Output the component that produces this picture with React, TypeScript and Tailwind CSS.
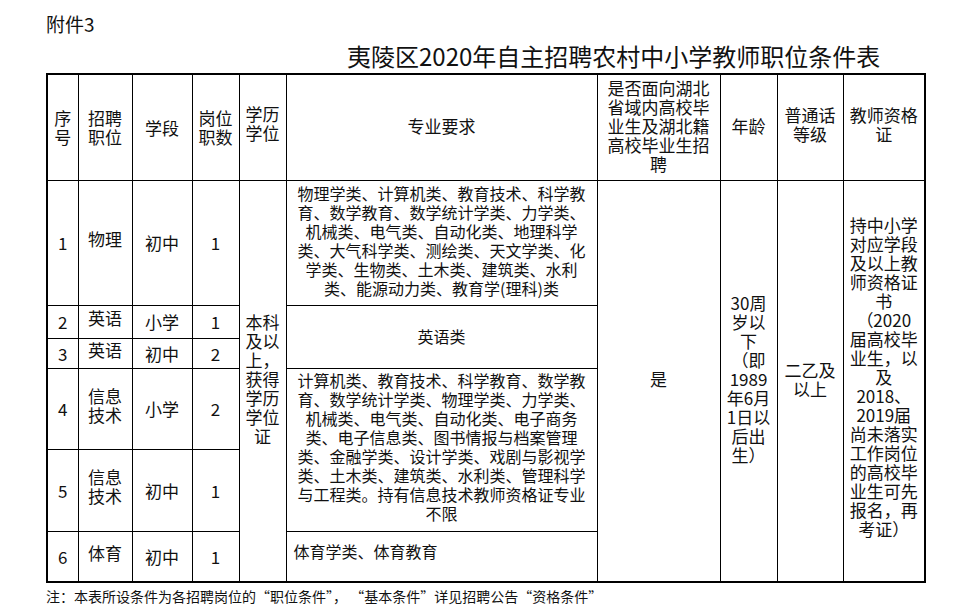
import React from 'react';

const cell = 'border border-black text-center align-middle p-0 whitespace-nowrap';

const Lines = ({ lines }: { lines: string[] }) => (
  <>
    {lines.map((l, i) => (
      <div key={i}>{l}</div>
    ))}
  </>
);

const physicsMajors = [
  '物理学类、计算机类、教育技术、科学教',
  '育、数学教育、数学统计学类、力学类、',
  '机械类、电气类、自动化类、地理科学',
  '类、大气科学类、测绘类、天文学类、化',
  '学类、生物类、土木类、建筑类、水利',
  '类、能源动力类、教育学(理科)类',
];

const itMajors = [
  '计算机类、教育技术、科学教育、数学教',
  '育、数学统计学类、物理学类、力学类、',
  '机械类、电气类、自动化类、电子商务',
  '类、电子信息类、图书情报与档案管理',
  '类、金融学类、设计学类、戏剧与影视学',
  '类、土木类、建筑类、水利类、管理科学',
  '与工程类。持有信息技术教师资格证专业',
  '不限',
];

const ageLines = ['30周', '岁以', '下', '（即', '1989', '年6月', '1日以', '后出', '生）'];

const certLines = [
  '持中小学',
  '对应学段',
  '及以上教',
  '师资格证',
  '书',
  '（2020',
  '届高校毕',
  '业生，以',
  '及',
  '2018、',
  '2019届',
  '尚未落实',
  '工作岗位',
  '的高校毕',
  '业生可先',
  '报名，再',
  '考证）',
];

export default function App() {
  return (
    <div className="w-[980px] h-[609px] bg-white text-[#111] font-['Noto_Sans_CJK_SC','Noto_Sans',sans-serif] pl-[46px] pt-[11px] overflow-hidden">
      <div className="text-[19px] leading-[25px]">附件3</div>
      <div className="mt-[5px] mb-[2px] pl-[301px] text-[24px] leading-[30px]">
        夷陵区2020年自主招聘农村中小学教师职位条件表
      </div>

      <table className="table-fixed border-collapse border-2 border-black w-[880px] text-[17px] leading-[19px]">
        <colgroup>
          <col className="w-[31px]" />
          <col className="w-[54px]" />
          <col className="w-[60px]" />
          <col className="w-[47px]" />
          <col className="w-[47px]" />
          <col className="w-[311px]" />
          <col className="w-[123px]" />
          <col className="w-[57px]" />
          <col className="w-[66px]" />
          <col className="w-[82px]" />
        </colgroup>
        <thead>
          <tr className="h-[106px]">
            <th className={`${cell} font-normal`}>
              <Lines lines={['序', '号']} />
            </th>
            <th className={`${cell} font-normal`}>
              <Lines lines={['招聘', '职位']} />
            </th>
            <th className={`${cell} font-normal`}>学段</th>
            <th className={`${cell} font-normal`}>
              <Lines lines={['岗位', '职数']} />
            </th>
            <th className={`${cell} font-normal pb-[8px]`}>
              <Lines lines={['学历', '学位']} />
            </th>
            <th className={`${cell} font-normal pb-[4px]`}>专业要求</th>
            <th className={`${cell} font-normal pb-[4px]`}>
              <Lines lines={['是否面向湖北', '省域内高校毕', '业生及湖北籍', '高校毕业生招', '聘']} />
            </th>
            <th className={`${cell} font-normal pb-[4px]`}>年龄</th>
            <th className={`${cell} font-normal pb-[6px]`}>
              <Lines lines={['普通话', '等级']} />
            </th>
            <th className={`${cell} font-normal pb-[6px]`}>
              <Lines lines={['教师资格', '证']} />
            </th>
          </tr>
        </thead>
        <tbody>
          <tr className="h-[125px]">
            <td className={cell}>1</td>
            <td className={`${cell} pb-[8px]`}>物理</td>
            <td className={cell}>初中</td>
            <td className={cell}>1</td>
            <td rowSpan={6} className={`${cell} pb-[4px]`}>
              <Lines lines={['本科', '及以', '上，', '获得', '学历', '学位', '证']} />
            </td>
            <td className={`${cell} pb-[4px] text-[16px]`}>
              <Lines lines={physicsMajors} />
            </td>
            <td rowSpan={6} className={`${cell} pb-[4px]`}>是</td>
            <td rowSpan={6} className={`${cell} pb-[4px]`}>
              <Lines lines={ageLines} />
            </td>
            <td rowSpan={6} className={`${cell} pb-[4px]`}>
              <Lines lines={['二乙及', '以上']} />
            </td>
            <td rowSpan={6} className={`${cell} pb-[8px]`}>
              <Lines lines={certLines} />
            </td>
          </tr>
          <tr className="h-[33px]">
            <td className={cell}>2</td>
            <td className={`${cell} pb-[8px]`}>英语</td>
            <td className={cell}>小学</td>
            <td className={cell}>1</td>
            <td rowSpan={2} className={`${cell} text-[16px]`}>英语类</td>
          </tr>
          <tr className="h-[30px]">
            <td className={cell}>3</td>
            <td className={`${cell} pb-[8px]`}>英语</td>
            <td className={cell}>初中</td>
            <td className={cell}>2</td>
          </tr>
          <tr className="h-[81px]">
            <td className={cell}>4</td>
            <td className={`${cell} pb-[8px]`}>
              <Lines lines={['信息', '技术']} />
            </td>
            <td className={cell}>小学</td>
            <td className={cell}>2</td>
            <td rowSpan={2} className={`${cell} pb-[6px] text-[16px]`}>
              <Lines lines={itMajors} />
            </td>
          </tr>
          <tr className="h-[82px]">
            <td className={cell}>5</td>
            <td className={`${cell} pb-[8px]`}>
              <Lines lines={['信息', '技术']} />
            </td>
            <td className={cell}>初中</td>
            <td className={cell}>1</td>
          </tr>
          <tr className="h-[51px]">
            <td className={cell}>6</td>
            <td className={`${cell} pb-[8px]`}>体育</td>
            <td className={cell}>初中</td>
            <td className={cell}>1</td>
            <td className={`${cell} text-left text-[16px] pl-[7px] pb-[9px]`}>体育学类、体育教育</td>
          </tr>
        </tbody>
      </table>

      <div className="mt-[4px] text-[14px] leading-[18px]">
        注：本表所设条件为各招聘岗位的“职位条件”， “基本条件”详见招聘公告“资格条件”
      </div>
    </div>
  );
}
